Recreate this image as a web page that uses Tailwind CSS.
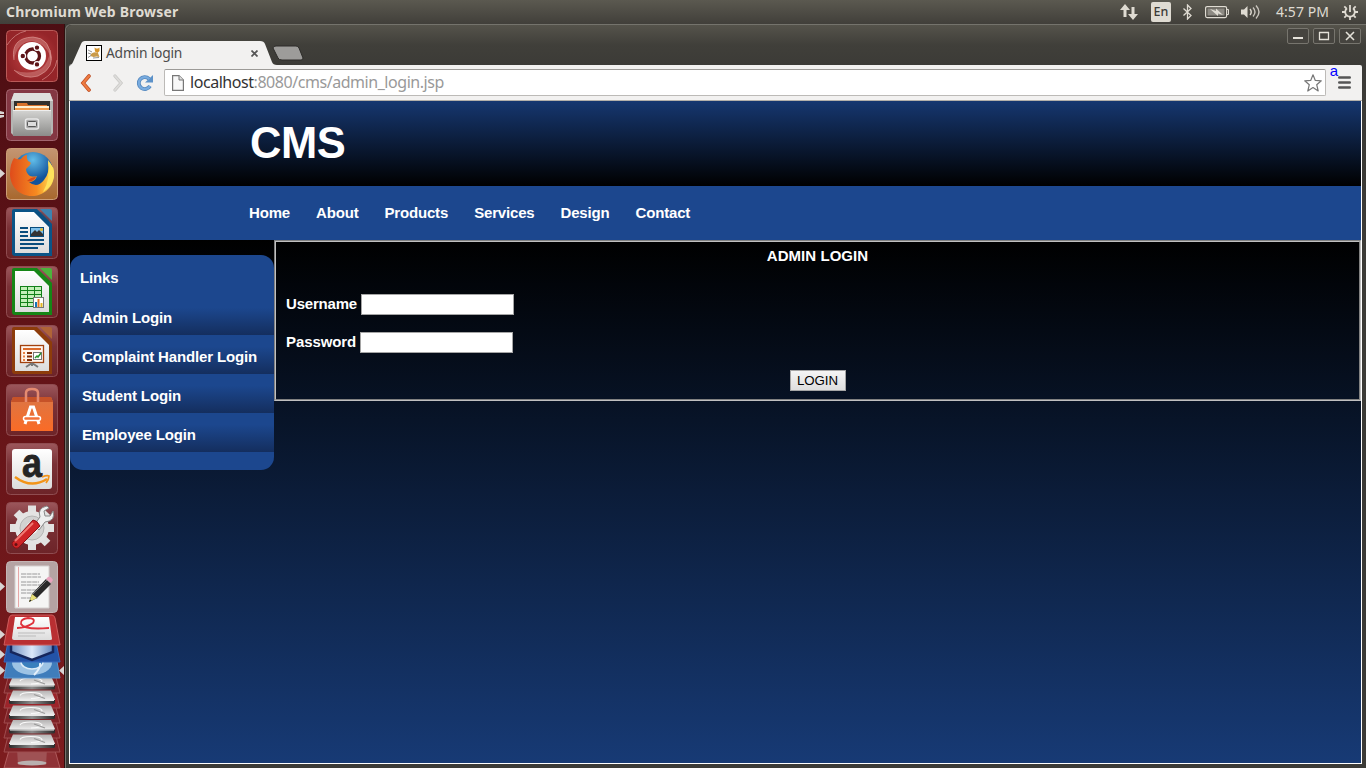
<!DOCTYPE html>
<html lang="en">
<head>
<meta charset="utf-8">
<title>Admin login</title>
<script src="https://cdn.jsdelivr.net/npm/@tailwindcss/browser@4"></script>
</head>
<body class="w-[1366px] h-[768px] overflow-hidden flex flex-col bg-[#3c3b37] font-['Noto_Sans',sans-serif]">

<!-- System panel -->
<header class="h-6 shrink-0 flex items-center justify-between bg-linear-to-b from-[#5b5950] via-[#4e4c45] to-[#413f3a] text-[#dfdbd2]">
  <div class="pl-1.5 text-[14px] leading-6 font-bold whitespace-nowrap tracking-[0.2px]">Chromium Web Browser</div>
  <div class="flex items-center h-6 pr-[8px]">
    <svg class="w-[18px] h-[18px]" viewBox="0 0 18 18" fill="#dfdbd2"><path d="M5 1L10 7H6.500V14H3.500V7H0z"/><path d="M13 17L8 11H11.500V4H14.500V11H18z"/></svg>
    <div class="ml-[13px] w-5 h-5 rounded-xs bg-[#dfdbd2] text-[#3c3b37] text-[12.5px] leading-5 text-center font-medium">En</div>
    <svg class="ml-3 w-[9px] h-4" viewBox="0 0 9 16" fill="none" stroke="#dfdbd2" stroke-width="1.300"><path d="M.5 4.500L8 11.500L4.500 15V1L8 4.500L.5 11.500"/></svg>
    <svg class="ml-[13px] w-6 h-3.5" viewBox="0 0 24 14"><rect x=".6" y="1.600" width="21" height="11" rx="1.500" fill="none" stroke="#dfdbd2" stroke-width="1.200"/><rect x="2.500" y="3.500" width="17" height="7" fill="#8d8a83"/><path d="M22 4.500h1.500v5H22" fill="none" stroke="#dfdbd2"/><path d="M5 4l6 2V3.500L18 10l-5-1.500v2.500z" fill="#dfdbd2"/></svg>
    <svg class="ml-3 w-5 h-4" viewBox="0 0 20 16"><path d="M0 5.500h3L6.500 2v12L3 10.500H0z" fill="#dfdbd2"/><g fill="none" stroke="#dfdbd2" stroke-width="1.400"><path d="M9 5q2.500 3 0 6"/><path d="M12 3.500q4 4.500 0 9" opacity=".85"/><path d="M15 1.500q6 6.500 0 13" opacity=".85"/></g></svg>
    <div class="ml-[15px] w-[53px] text-[14px] leading-6 tracking-[0.05px] whitespace-nowrap">4:57 PM</div>
    <svg class="ml-[13px] w-4 h-4" viewBox="0 0 16 16" fill="none" stroke="#dfdbd2"><path d="M5 4.200a4.800 4.800 0 1 0 6 0" stroke-width="1.800"/><path d="M8 1v7" stroke-width="1.800"/><path d="M0 8h3M13 8h3M8 13v3M2.300 2.300l2 2M13.700 2.300l-2 2M2.300 13.700l2-2M13.700 13.700l-2-2" stroke-width="1.800"/></svg>
  </div>
</header>

<div class="flex-1 flex min-h-0">

<!-- Launcher -->
<aside class="relative w-[65px] shrink-0 bg-linear-to-b from-[#4d0e13] via-[#651418] to-[#7d1c1e] border-r border-[#30100f] flex flex-col items-start pl-1.5 pt-1.5 gap-[7px] overflow-hidden">
  <svg class="w-[52px] h-[52px] shrink-0" viewBox="0 0 52 52">
    <defs>
      <linearGradient id="tile" x2="0" y2="1"><stop stop-color="#9c575c"/><stop offset=".4" stop-color="#7a3136"/><stop offset="1" stop-color="#6d2428"/></linearGradient>
      <radialGradient id="dash"><stop stop-color="#c74e4c"/><stop offset=".6" stop-color="#a83234"/><stop offset="1" stop-color="#952529"/></radialGradient>
      <linearGradient id="paper" x2="0" y2="1"><stop stop-color="#fff"/><stop offset="1" stop-color="#dcdcdc"/></linearGradient>
      <linearGradient id="metal" x2="0" y2="1"><stop stop-color="#d4d4d2"/><stop offset="1" stop-color="#8c8c8a"/></linearGradient>
    </defs>
    <rect x=".5" y=".5" width="51" height="51" rx="4" fill="url(#dash)" stroke="#b95a58"/>
    <path d="M8 30Q4 8 27 7Q45 8 45 30Q42 14 26 11Q11 12 8 30z" fill="#e0a09c" opacity=".4"/><path d="M44 20Q50 38 32 46Q18 50 8 40Q24 46 36 38Q43 32 44 20z" fill="#e0a09c" opacity=".4"/>
    <g fill="none" stroke="#e3a19d" stroke-width="1" opacity=".6"><path d="M8 30Q4 8 27 7Q45 8 45 30M44 20Q50 38 32 46Q18 50 8 40"/><path d="M1 15Q9 3 20 1M36 50Q49 43 51 30"/></g>
    <circle cx="26" cy="26" r="14" fill="#fff"/>
    <circle cx="26.500" cy="26" r="7" fill="none" stroke="#5c1417" stroke-width="3.300"/>
    <g stroke="#fff" stroke-width="1.200" fill="#5c1417"><circle cx="16.800" cy="26" r="2.800"/><circle cx="31" cy="17.600" r="2.800"/><circle cx="31" cy="34.400" r="2.800"/></g>
  </svg>

  <svg class="w-[52px] h-[52px] shrink-0" viewBox="0 0 52 52">
    <rect x=".5" y=".5" width="51" height="51" rx="4" fill="#843743" stroke="#a2656e"/>
    <path d="M8 4H44L47 12V44L44 47H8L5 44V12z" fill="#b5b5b3"/><path d="M8 4H44L47 12H5z" fill="#dededc"/>
    <rect x="8" y="12" width="36" height="13" fill="#32302d"/>
    <path d="M11 14h10l1 2h19v8H11z" fill="#d8722b"/><rect x="9" y="17" width="34" height="2" fill="#fff0d0"/><path d="M9 19h34v5H9z" fill="#f19b4b"/>
    <path d="M7 21H45V47H7z" fill="url(#metal)"/><path d="M7 21.500h38" stroke="#eee"/>
    <rect x="19.500" y="30" width="13" height="10" rx="2" fill="#aaa" stroke="#e8e8e8" stroke-width="1.500"/><rect x="21.500" y="32.500" width="9" height="5" rx="1" fill="#ddd" stroke="#555"/>
  </svg>

  <svg class="w-[52px] h-[52px] shrink-0" viewBox="0 0 52 52">
    <defs><radialGradient id="globe" cx=".5" cy=".2"><stop stop-color="#61bde9"/><stop offset="1" stop-color="#12539b"/></radialGradient><linearGradient id="fox" x2="1" y2="0"><stop stop-color="#df4c1b"/><stop offset=".6" stop-color="#f68a20"/><stop offset="1" stop-color="#ffe95a"/></linearGradient><linearGradient id="amber" x2="0" y2="1"><stop stop-color="#c49572"/><stop offset="1" stop-color="#a8682e"/></linearGradient></defs>
    <rect x=".5" y=".5" width="51" height="51" rx="4" fill="url(#amber)" stroke="#cc9d76"/>
    <circle cx="27" cy="24" r="20" fill="url(#globe)"/>
    <path d="M8 10Q12 12 15 11Q18 7 21 7Q20 10 22 13Q26 14 24 17L20 21Q20 25 24 28Q29 29 31 28Q29 34 23 34Q31 41 38 32Q44 25 42 14Q49 18 48 28C47 40 37 48 26 48C13 48 4 38 4 26Q4 16 8 10z" fill="url(#fox)"/>
    <path d="M42 12Q48 19 48 28Q46 39 37 44Q45 31 42 12z" fill="#ffe25c"/><path d="M21 33q4-4 9-4q-2 5-9 4" fill="#d8491b"/>
  </svg>

  <svg class="w-[52px] h-[52px] shrink-0" viewBox="0 0 52 52">
    <rect x=".5" y=".5" width="51" height="51" rx="4" fill="url(#tile)" stroke="#8f4c50"/>
    <path d="M8 2H31L46 17V49H9q-3 0-3-3V4q0-2 2-2z" fill="#0b5487"/><path d="M34 2h10q2 0 2 2v10z" fill="#3e83b0"/>
    <path d="M9 5H28L43 20V46H9z" fill="url(#paper)"/><path d="M28 5L43 20V12L36 5z" fill="#0b4570" opacity=".3"/>
    <g fill="#094d7d"><path d="M14 20h8v2h-8zM14 24h8v2h-8zM14 28h8v2h-8zM14 32h24v2H14zM14 36h24v2H14zM14 40h18v2H14z"/><rect x="24" y="20" width="14" height="10"/></g><path d="M25 21h12v8H25z" fill="#80c1ea"/><path d="M25 29v-2l4-4 2 2 2-2 4 4v2z" fill="#333"/><circle cx="35.500" cy="22.500" r="1.500" fill="#e7ba2c"/>
  </svg>

  <svg class="w-[52px] h-[52px] shrink-0" viewBox="0 0 52 52">
    <rect x=".5" y=".5" width="51" height="51" rx="4" fill="url(#tile)" stroke="#8f4c50"/>
    <path d="M8 2H31L46 17V49H9q-3 0-3-3V4q0-2 2-2z" fill="#168616"/><path d="M34 2h10q2 0 2 2v10z" fill="#4db23c"/>
    <path d="M9 5H28L43 20V46H9z" fill="url(#paper)"/>
    <rect x="14.500" y="20.500" width="21" height="20" fill="#c3efb8" stroke="#128019"/><path d="M15 24.500h20M15 28.500h20M15 32.500h20M15 36.500h20M21.500 21v19M28.500 21v19" stroke="#128019"/>
    <rect x="27.500" y="31.500" width="10" height="10" fill="#fff" stroke="#777"/><path d="M29 36h2v5h-2z" fill="#1674b8"/><path d="M31.500 33h2v8h-2z" fill="#e8731c"/><path d="M34.500 37h2v4h-2z" fill="#e3b521"/>
  </svg>

  <svg class="w-[52px] h-[52px] shrink-0" viewBox="0 0 52 52">
    <rect x=".5" y=".5" width="51" height="51" rx="4" fill="url(#tile)" stroke="#8f4c50"/>
    <path d="M8 2H31L46 17V49H9q-3 0-3-3V4q0-2 2-2z" fill="#8d3c0b"/><path d="M34 2h10q2 0 2 2v10z" fill="#b06437"/>
    <path d="M9 5H28L43 20V46H9z" fill="url(#paper)"/>
    <rect x="14.500" y="20.500" width="23" height="17" fill="#fff5ed" stroke="#a2410e" stroke-width="1.300"/><path d="M17 23h18v2H17z" fill="#db6a2b"/><path d="M17 27h2v2h-2zM17 30.500h2v2h-2zM17 34h2v2h-2z" fill="#e88244"/><path d="M21 27h5v2h-5zM21 30.500h5v2h-5zM21 34h5v2h-5z" fill="#81310b"/><rect x="27.500" y="27.500" width="8" height="7" fill="#fff" stroke="#777"/><path d="M29 33l2-2 1 1 3-4" stroke="#24932b" stroke-width="1.500" fill="none"/><path d="M26 38v3M26 38l-6 4M26 38l6 4" stroke="#777" stroke-width="2"/>
  </svg>

  <svg class="w-[52px] h-[52px] shrink-0" viewBox="0 0 52 52">
    <defs><linearGradient id="bag" x2="0" y2="1"><stop stop-color="#dc7645"/><stop offset="1" stop-color="#fa6b26"/></linearGradient></defs>
    <rect x=".5" y=".5" width="51" height="51" rx="4" fill="url(#tile)" stroke="#8f4c50"/>
    <path d="M7 13H45L47 18V47H5V18z" fill="url(#bag)"/><path d="M7 13H45L47 18H5z" fill="#c65228"/>
    <path d="M20 18V9q0-4 6-4t6 4v9" fill="none" stroke="#e58b70" stroke-width="2.500"/>
    <path d="M19 40L24.500 23h3L33 40" fill="none" stroke="#fff" stroke-width="3"/><rect x="17.500" y="32.500" width="17" height="4" rx="2" fill="#f37139" stroke="#fff" stroke-width="1.500"/>
  </svg>

  <svg class="w-[52px] h-[52px] shrink-0 overflow-visible" viewBox="0 0 52 52">
    <rect x=".5" y=".5" width="51" height="51" rx="4" fill="url(#tile)" stroke="#8f4c50"/>
    <rect x="6" y="6" width="40" height="40" rx="3" fill="url(#paper)"/>
    <text x="16" y="33.500" font-family="Liberation Sans, sans-serif" font-weight="700" font-size="40" fill="#242424" stroke="#242424" stroke-width=".8" textLength="20" lengthAdjust="spacingAndGlyphs">a</text>
    <path d="M9 34Q25 46 41 36" fill="none" stroke="#f29419" stroke-width="2.400"/><path d="M36 34q5-2 7-1q0 3-3 7" fill="none" stroke="#f29419" stroke-width="1.700"/>
  </svg>

  <svg class="w-[52px] h-[52px] shrink-0" viewBox="0 0 52 52">
    <rect x=".5" y=".5" width="51" height="51" rx="4" fill="url(#tile)" stroke="#8f4c50"/>
    <g stroke="#e2e2e1" stroke-width="8"><path d="M26 3.500V48M4 26H48M10.500 10.500L41.500 41.500M41.500 10.500L10.500 41.500"/></g><circle cx="26" cy="26" r="17" fill="#e4e4e3"/><circle cx="26" cy="26" r="12" fill="#d2d2d1" stroke="#b6b6b5"/><circle cx="26" cy="26" r="6" fill="#f0f0ef"/>
    <path d="M28 23L34 15Q31 6 41 4L43 6L38 9L39 14L44 14L47 9Q50 19 39 20L33 28z" fill="#efefef" stroke="#888" stroke-width="1"/><path d="M27 18Q31 18 34 24L12 46Q7 47 6 41Z" fill="#cf2527" stroke="#8e1015"/><path d="M27 21L9 39" stroke="#f27b74" stroke-width="2"/><circle cx="10" cy="42.500" r="1.500" fill="#641013"/>
  </svg>

  <svg class="w-[52px] h-[52px] shrink-0" viewBox="0 0 52 52">
    <rect x=".5" y=".5" width="51" height="51" rx="4" fill="#b5a3a3" stroke="#c4b5b5"/>
    <path d="M9 5H43V47H9z" fill="#f5f5f4" stroke="#d4d0cf"/><path d="M12.500 6v40" stroke="#e7a7a7"/><path d="M15 13h19M15 16h20M15 21h18M15 24h23M15 29h18M15 32h20M15 37h17" stroke="#999" stroke-width="1.200" stroke-dasharray="5 .6"/>
    <path d="M23 41L26 33L40 18L45 23L31 37z" fill="#292929"/><path d="M27 33L41 19" stroke="#777"/><path d="M23 41L26 33L31 37z" fill="#e8df77"/><path d="M40 18l2-2q3-1 5 3l-2 3z" fill="#e9a3bd"/><path d="M23 41l1-2.500 1.500 1z" fill="#222"/>
  </svg>

  <!-- Folded launcher stack -->
  <svg class="absolute left-0 top-[590px] w-[64px] h-[154px]" viewBox="0 0 64 154">
    <defs>
      <linearGradient id="drive" x2="0" y2="1"><stop stop-color="#b4b2b2"/><stop offset="1" stop-color="#f0f0f0"/></linearGradient>
      <linearGradient id="edge" x2="1"><stop stop-color="#2b2b2b"/><stop offset=".5" stop-color="#8d8d8d"/><stop offset="1" stop-color="#2b2b2b"/></linearGradient>
      <linearGradient id="box"><stop stop-color="#6f8fc0"/><stop offset=".5" stop-color="#dce8fa"/><stop offset="1" stop-color="#5f83bb"/></linearGradient>
      <g id="disk">
        <path d="M13 0H51L55 9Q55 10 54 10H10Q9 10 9 9z" fill="url(#drive)"/>
        <path d="M20 5Q21 2 31 2T42 5Q40 8 31 8" fill="none" stroke="#fafafa" stroke-width="1.200"/><path d="M34 4L45 8" stroke="#9a9a9a" stroke-width="1.300"/>
        <path d="M9 9.500H55V12Q55 13.500 53 13.500H11Q9 13.500 9 12z" fill="url(#edge)"/><path d="M10 10H54" stroke="#e9e9e9" stroke-width="1"/>
      </g>
    </defs>
    <path d="M10 133H54L60 154H4z" fill="#8f3236" stroke="#b05b5d"/><path d="M17 135h30l-1 16H18z" fill="#a35a5c" opacity=".8"/><ellipse cx="32" cy="149" rx="14.500" ry="2.500" fill="#b9b0af"/>
    <g fill="#7d2226" stroke="#a04c4e"><path d="M9 118H55L60 138H4z"/><path d="M9 104H55L60 124H4z"/><path d="M9 90H55L60 109H4z"/><path d="M9 73H55L60 94H4z" fill="#9c242a"/><path d="M9 60H55L60 79H4z"/></g>
    <use href="#disk" y="120.500"/><use href="#disk" y="106"/><use href="#disk" y="91.500"/><use href="#disk" y="76.500"/><use href="#disk" y="62"/>
    <path d="M8 42H56L60 64H4z" fill="#3f7dbb" stroke="#5b95cc"/><ellipse cx="32" cy="49" rx="20" ry="12" fill="#9dc3e4"/><ellipse cx="32" cy="48" rx="11" ry="7" fill="#3a80bd" stroke="#dcecf7" stroke-width="1.500"/><path d="M40 49q1 5-6 12" fill="none" stroke="#e3effa" stroke-width="2"/>
    <path d="M8 28H56L60 48H4z" fill="#2353a7" stroke="#396bbd"/><path d="M11 28H53V38L32 46L11 38z" fill="url(#box)" stroke="#16265c" stroke-width="2.500"/>
    <path d="M12 1H52Q54 1 55 4L60 31H4L9 4Q10 1 12 1z" fill="#b92f32" stroke="#ce5c5c"/>
    <path d="M15 3H49L52 25Q52 26 50 26H14Q12 26 12 24z" fill="url(#paper)"/><path d="M17 14Q26 14 33 9Q36 4 28 4Q20 5 21 10Q24 16 49 14" fill="none" stroke="#df303a" stroke-width="1.800"/><path d="M18 19h27M18 22h18" stroke="#bbb"/>
  </svg>

  <!-- Running markers -->
  <svg class="absolute left-0 top-0 w-[65px] h-[744px]" viewBox="0 0 65 744" fill="#d8d4d3">
    <path d="M0 87l4 1v2H0zM0 91h4v2l-4 1zM0 145l5 4.500L0 154zM0 558l5 4.500L0 567zM0 606l5 4.500L0 615zM0 626l5 4.500L0 635zM0 642l5 4.500L0 651zM64 642l-5 4.500 5 4.500z"/>
  </svg>
</aside>

<!-- Browser window -->
<main class="flex-1 min-w-0 flex flex-col bg-[#3c3b37] border-t border-l border-[#74736c] rounded-tl-md pl-[3px] pr-1 pb-1">
  <!-- Title bar and tabs -->
  <div class="relative h-10 shrink-0 -ml-[3px] -mr-1 pl-[3px] bg-linear-to-b from-[#55534b] via-[#403f3a] to-[#3c3b37] rounded-tl-md flex items-end justify-between">
    <div class="flex h-6 relative">
      <svg class="absolute left-0 top-0 w-[240px] h-6" viewBox="0 0 240 24"><path d="M0 24Q3 24 4 21L12 3Q13 0 16 0H191Q195 0 196 3L203 21Q204 24 208 24z" fill="#f2f1f0"/><path d="M207 5H227Q229 5 230 7L234 17Q234 19 232 19H213Q210 19 209 17L204 7Q204 5 207 5z" fill="#9d9c9a" stroke="#2c2b28"/></svg>
      <div class="relative flex items-center h-6 pl-[17px] w-[198px]">
        <svg class="w-4 h-4" viewBox="0 0 16 16"><rect x=".5" y=".5" width="15" height="15" fill="#fff" stroke="#000"/><path d="M5 9q3-3 7-1l1.500 4-3-.5-3 .5-3-1z" fill="#c99a4a"/><path d="M8.500 2.500l1.500 1H12L13.500 2.500v3.500L11.500 8 9 6.500z" fill="#d7952c"/><path d="M2 5l4 2M2 12.500l3-2M2 8l3 1M7 13l6-.5" stroke="#777" stroke-width=".8"/></svg>
        <span class="ml-1 text-[13.8px] text-[#4c4c4c] tracking-[-0.2px] whitespace-nowrap">Admin login</span>
        <svg class="ml-auto mr-[9px] w-[7px] h-[7px]" viewBox="0 0 7 7" stroke="#555" stroke-width="1.700"><path d="M.5.5l6 6M6.500.5l-6 6"/></svg>
      </div>
    </div>
    <div class="flex gap-1 self-start mt-[3px] pr-[5px]">
      <svg class="w-[22px] h-4" viewBox="0 0 22 16"><rect x=".5" y=".5" width="21" height="15" rx="1.500" fill="#46443f" stroke="#77756e"/><path d="M6 10h10" stroke="#e5e2da" stroke-width="2"/></svg>
      <svg class="w-[22px] h-4" viewBox="0 0 22 16"><rect x=".5" y=".5" width="21" height="15" rx="1.500" fill="#46443f" stroke="#77756e"/><path d="M6.500 4v7.500h9V4M6 4.500h10" stroke="#e5e2da" fill="none" stroke-width="1.300"/></svg>
      <svg class="w-[22px] h-4" viewBox="0 0 22 16"><rect x=".5" y=".5" width="21" height="15" rx="1.500" fill="#46443f" stroke="#77756e"/><path d="M7 4l8 8M15 4l-8 8" stroke="#e5e2da" stroke-width="1.600"/></svg>
    </div>
  </div>

  <!-- Toolbar -->
  <div class="relative h-9 shrink-0 bg-[#f2f1f0] border-b border-[#b4b0aa] rounded-t-xs flex items-center pl-[11px] pr-[11px]">
    <svg class="w-3 h-[18px]" viewBox="0 0 12 18"><path d="M9 2L3 9l6 7" fill="none" stroke="#bd4b20" stroke-width="3.600" stroke-linecap="round"/><path d="M9 2L3 9l6 7" fill="none" stroke="#ee7c42" stroke-width="2.200" stroke-linecap="round"/></svg>
    <svg class="ml-5 w-3 h-[18px]" viewBox="0 0 12 18"><path d="M3 2l6 7-6 7" fill="none" stroke="#c9c8c6" stroke-width="3.200" stroke-linecap="round"/><path d="M3 2l6 7-6 7" fill="none" stroke="#dddcda" stroke-width="1.800" stroke-linecap="round"/></svg>
    <svg class="ml-3 w-[18px] h-[18px]" viewBox="0 0 18 18"><path d="M13 4.800A6 6 0 1 0 14 12" fill="none" stroke="#5487bd" stroke-width="3.800"/><path d="M9 8.500h8V1z" fill="#5c91c8"/><path d="M13 4.800A6 6 0 1 0 14 12" fill="none" stroke="#78abdf" stroke-width="2.200"/></svg>
    <div class="ml-2.5 flex-1 h-[27px] bg-white border border-[#bcbab7] border-t-[#9c9a97] rounded-xs flex items-center pl-[7px] pr-[3px] mr-3">
      <svg class="w-3 h-4" viewBox="0 0 12 16"><path d="M.6.6H7L11.400 5V15.400H.6z" fill="#f8f8f8" stroke="#777" stroke-width="1.200"/><path d="M7 .6V5h4.400" fill="#ddd" stroke="#777"/></svg>
      <div class="ml-1.5 pb-0.5 text-[16px] leading-6 text-[#999] tracking-[-0.45px] whitespace-nowrap"><span class="text-[#333]">localhost</span>:8080/cms/admin_login.jsp</div>
      <svg class="ml-auto w-[18px] h-[18px]" viewBox="0 0 18 18"><path d="M9 .8l2.300 5.600 6 .4-4.600 3.900L14.200 17 9 13.600 3.800 17l1.500-6.300L.7 6.800l6-.4z" fill="#fff" stroke="#777" stroke-width="1.200" stroke-linejoin="round"/></svg>
    </div>
    <svg class="w-[13px] h-[13px]" viewBox="0 0 13 13" stroke="#555" stroke-width="2.600" stroke-linecap="round"><path d="M1.300 1.500h10.400M1.300 6.500h10.400M1.300 11.500h10.400"/></svg>
    <span class="absolute right-6 -top-[3px] text-[15px] leading-[17px] text-[#0000ff] font-['Liberation_Sans',sans-serif]">a</span>
  </div>

  <!-- Page -->
  <div class="flex-1 min-h-0 flex flex-col border-x border-b border-white text-white font-bold text-[15px] tracking-[-0.14px] font-['Liberation_Sans',Arial,sans-serif]">
    <div class="h-[85px] shrink-0 bg-linear-to-b/srgb from-[#163770] to-black pl-[180px] pt-[15px]">
      <h1 class="text-[43.5px] leading-[54px] tracking-[-0.4px]">CMS</h1>
    </div>
    <nav class="h-[54px] shrink-0 bg-[#1c478e] flex items-center gap-[26px] pl-[179px] tracking-[-0.17px]">
      <a>Home</a><a>About</a><a>Products</a><a>Services</a><a>Design</a><a>Contact</a>
    </nav>
    <div class="flex-1 flex items-start bg-linear-to-b/srgb from-black to-[#173a75]">
      <div class="mt-[15px] w-[204px] h-[215px] shrink-0 rounded-[13px] bg-[#1c478e]">
        <div class="h-[41px] pl-2.5 pt-3 leading-[22px]">Links</div>
        <ul class="whitespace-nowrap">
          <li class="h-[39px] pl-3 pt-[2px] leading-[40px] bg-linear-to-b/srgb from-[#1c478e] from-30% to-[#142e5e]">Admin Login</li>
          <li class="h-[39px] pl-3 pt-[2px] leading-[40px] bg-linear-to-b/srgb from-[#1c478e] from-30% to-[#142e5e]">Complaint Handler Login</li>
          <li class="h-[39px] pl-3 pt-[2px] leading-[40px] bg-linear-to-b/srgb from-[#1c478e] from-30% to-[#142e5e]">Student Login</li>
          <li class="h-[39px] pl-3 pt-[2px] leading-[40px] bg-linear-to-b/srgb from-[#1c478e] from-30% to-[#142e5e]">Employee Login</li>
        </ul>
      </div>
      <form class="flex-1 h-[161px] border border-t-[#808080] border-l-[#808080] border-r-[#c0c0c0] border-b-[#c0c0c0]">
        <div class="h-full border border-t-[#c0c0c0] border-l-[#c0c0c0] border-r-[#808080] border-b-[#808080] flex flex-col px-2.5">
          <div class="mt-[5px] h-[18px] leading-[18px] text-center tracking-[0.05px]">ADMIN LOGIN</div>
          <label class="mt-[29px] h-[21px] flex items-center gap-1 tracking-[-0.2px]">Username<input class="w-[153px] h-[21px] bg-white border border-[#a5a5a5]"></label>
          <label class="mt-[17px] h-[21px] flex items-center gap-1 tracking-[-0.1px]">Password<input type="password" class="w-[153px] h-[21px] bg-white border border-[#a5a5a5]"></label>
          <button type="button" class="mt-[17px] self-center w-14 h-[21px] border border-[#a5a5a5] bg-linear-to-b from-[#f5f5f5] to-[#dedede] text-black text-[13.3px] leading-[19px] tracking-[-0.1px] font-normal">LOGIN</button>
        </div>
      </form>
    </div>
  </div>
</main>
</div>
</body>
</html>
